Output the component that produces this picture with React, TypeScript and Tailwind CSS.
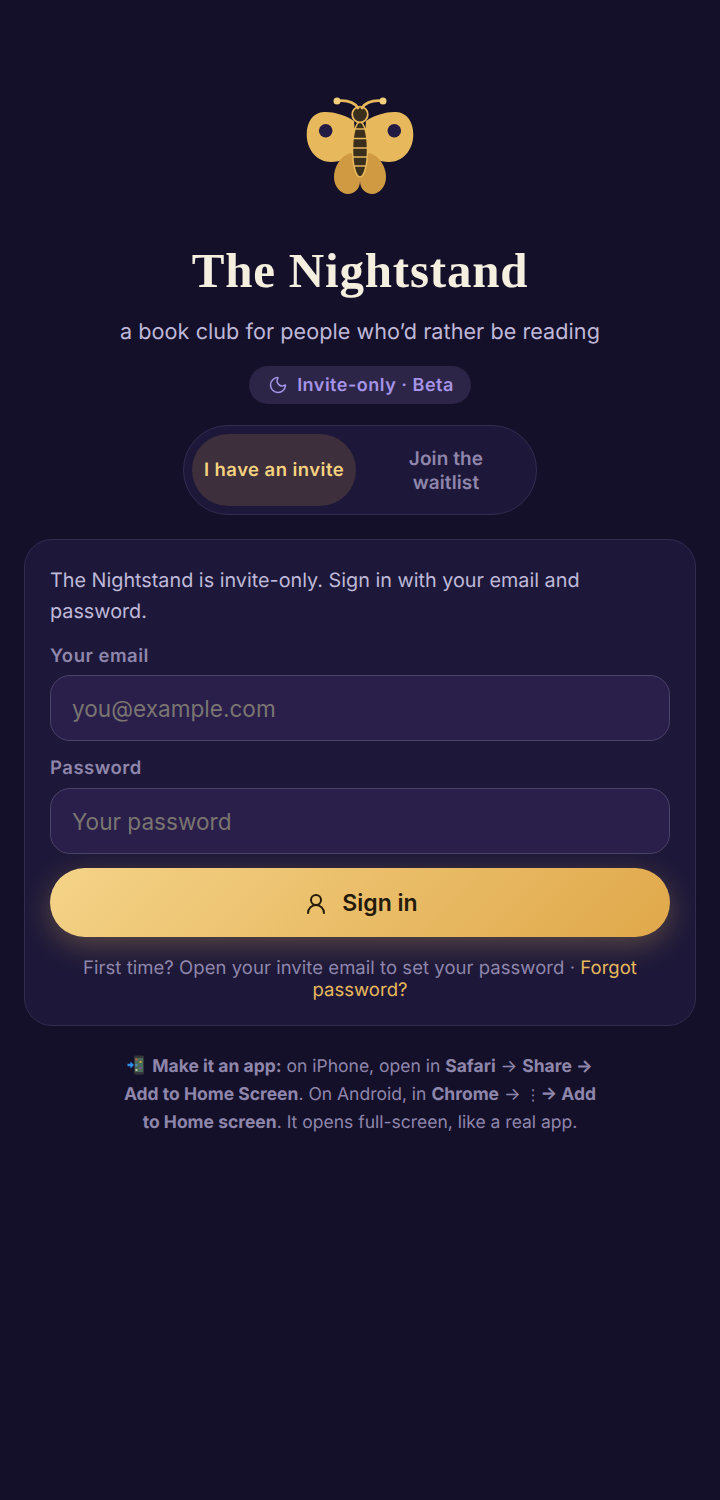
import { Moon, UserRound } from "lucide-react";

function Butterfly() {
  return (
    <svg width="120" height="120" viewBox="0 0 120 120" className="block">
      <g fill="#e8b85c">
        <path d="M54 36C46 30 33 26.500 24 27C13 27.500 6.500 37 6.700 50C7 66 18 77 31 77C41 77 50 73 56 66Z" />
        <path d="M66 36C74 30 87 26.500 96 27C107 27.500 113.500 37 113.300 50C113 66 102 77 89 77C79 77 70 73 64 66Z" />
      </g>
      <g fill="#cf9a42">
        <path d="M52 68C42 69 34 81 34 92C34 102 41 109 48 109C54 109 60 104 60 96L60 80Z" />
        <path d="M68 68C78 69 86 81 86 92C86 102 79 109 72 109C66 109 60 104 60 96L60 80Z" />
      </g>
      <circle cx="25.700" cy="45.700" r="6.800" fill="#221c44" />
      <circle cx="94.300" cy="45.700" r="6.800" fill="#221c44" />
      <ellipse cx="60" cy="64.500" rx="7.500" ry="27.500" fill="#3a2f1c" stroke="#e8b85c" strokeWidth="1.500" />
      <g stroke="#e8b85c" strokeWidth="1.500">
        <path d="M53 44H67M52.500 53.500H67.500M52.500 63H67.500M52.500 72H67.500M54 81H66" />
      </g>
      <circle cx="60" cy="29.500" r="7.800" fill="#3a2f1c" stroke="#e8b85c" strokeWidth="1.800" />
      <path d="M58 23C54 17 46 15 37 16M62 23C66 17 74 15 83 16" fill="none" stroke="#e8b85c" strokeWidth="2.700" strokeLinecap="round" />
      <circle cx="37" cy="16" r="3.500" fill="#f4cf7d" />
      <circle cx="83" cy="16" r="3.500" fill="#f4cf7d" />
    </svg>
  );
}

function PhoneEmoji() {
  return (
    <svg width="18" height="20" viewBox="0 0 18 20" className="inline-block align-[-3px] mr-[2px]">
      <rect x="7" y="0.500" width="10" height="19" rx="1.500" fill="#33363a" />
      <rect x="8" y="3" width="8" height="14" fill="#4a6a5a" />
      <rect x="8.500" y="3.500" width="2" height="2" fill="#c0563f" />
      <rect x="12.500" y="6" width="2" height="2" fill="#c9a13f" />
      <rect x="8.500" y="9" width="2" height="2" fill="#4f8fc0" />
      <rect x="12.500" y="12" width="2" height="2" fill="#7a4fa0" />
      <rect x="8.500" y="14" width="2" height="2" fill="#b8c0a0" />
      <path d="M0.500 8.800H3.500V6.500L7 10L3.500 13.500V11.200H0.500Z" fill="#2f8fe8" />
    </svg>
  );
}

export default function App() {
  return (
    <div className="min-h-[1500px] bg-[#14102a] font-['Inter',sans-serif] [text-rendering:geometricPrecision] antialiased flex flex-col items-center px-6 pt-[85px]">
      <Butterfly />
      <h1 className="mt-[37px] font-['Liberation_Serif',serif] font-bold text-[49px] leading-[58px] tracking-[0.800px] text-[#f5efe0]">
        The Nightstand
      </h1>
      <p className="mt-[16px] text-[21.600px] leading-[32px] tracking-[0.050px] text-[#bfb8d8]">
        a book club for people who’d rather be reading
      </p>
      <div className="mt-[18px] h-[38px] w-[222px] pl-[2px] rounded-full bg-[#2d2547] flex items-center justify-center gap-[9px] text-[#a594e8] text-[18px] tracking-[0.500px] font-semibold">
        <Moon size={20} strokeWidth={1.800} />
        <span>Invite-only · Beta</span>
      </div>
      <div className="mt-[21px] w-[354px] h-[90px] rounded-full bg-[#1d1839] border border-[#322d4f] flex items-center pl-[8px] pr-[8px]">
        <div className="w-[164px] h-[72px] pt-[1px] rounded-full bg-[#3d2f3c] flex items-center justify-center text-[#f5d27f] text-[18.500px] tracking-[0.450px] font-semibold">
          I have an invite
        </div>
        <div className="flex-1 ml-[8px] pt-[2px] text-center text-[#8f86ab] text-[19px] leading-[24px] tracking-[0.100px] font-semibold px-[28px]">
          Join the waitlist
        </div>
      </div>
      <div className="mt-[24px] w-full rounded-[28px] bg-[#1d1839] border border-[#322d4f] px-[25px] pt-[25px] pb-[24px]">
        <p className="text-[19.800px] leading-[31px] text-[#bfb8d8]">
          The Nightstand is invite-only. Sign in with your email and password.
        </p>
        <label className="block mt-[17px] text-[18.500px] leading-[24px] font-semibold tracking-[0.500px] text-[#8f86ab]">Your email</label>
        <input
          placeholder="you@example.com"
          className="mt-[7px] block w-full h-[66px] rounded-[20px] bg-[#291f4a] border border-[#4a4468] px-[21px] text-[22.600px] placeholder:text-[#7a7570] outline-none"
        />
        <label className="block mt-[15px] text-[18.500px] leading-[24px] font-semibold tracking-[0.500px] text-[#8f86ab]">Password</label>
        <input
          placeholder="Your password"
          className="mt-[8px] block w-full h-[66px] rounded-[20px] bg-[#291f4a] border border-[#4a4468] px-[21px] text-[22.600px] placeholder:text-[#7a7570] outline-none"
        />
        <button className="mt-[14px] w-full h-[69px] pt-[2px] pl-[2px] rounded-full bg-[linear-gradient(135deg,#f4d388,#e0a84a)] shadow-[0_8px_30px_rgba(232,184,92,0.3)] flex items-center justify-center gap-[14px] text-[23px] font-semibold text-[#241a0a]">
          <UserRound size={24} strokeWidth={2} />
          <span>Sign in</span>
        </button>
        <p className="mt-[20px] text-center text-[18.500px] leading-[22px] tracking-[0.040px] text-[#8f86ab]">
          First time? Open your invite email to set your password · <span className="text-[#e8b85c]">Forgot</span> <span className="text-[#e8b85c]">password?</span>
        </p>
      </div>
      <p className="mt-[27px] w-[490px] text-center text-[17.500px] leading-[28px] text-[#8f86ab]">
        <PhoneEmoji /> <b>Make it an app:</b> on iPhone, open in <b>Safari</b> → <b>Share →</b> <b>Add to Home Screen</b>. On Android, in <b>Chrome</b> → <span className="text-[15px] leading-none">⋮</span> <b className="ml-[-5px]">→ Add</b> <b>to Home screen</b>. It opens full-screen, like a real app.
      </p>
    </div>
  );
}
